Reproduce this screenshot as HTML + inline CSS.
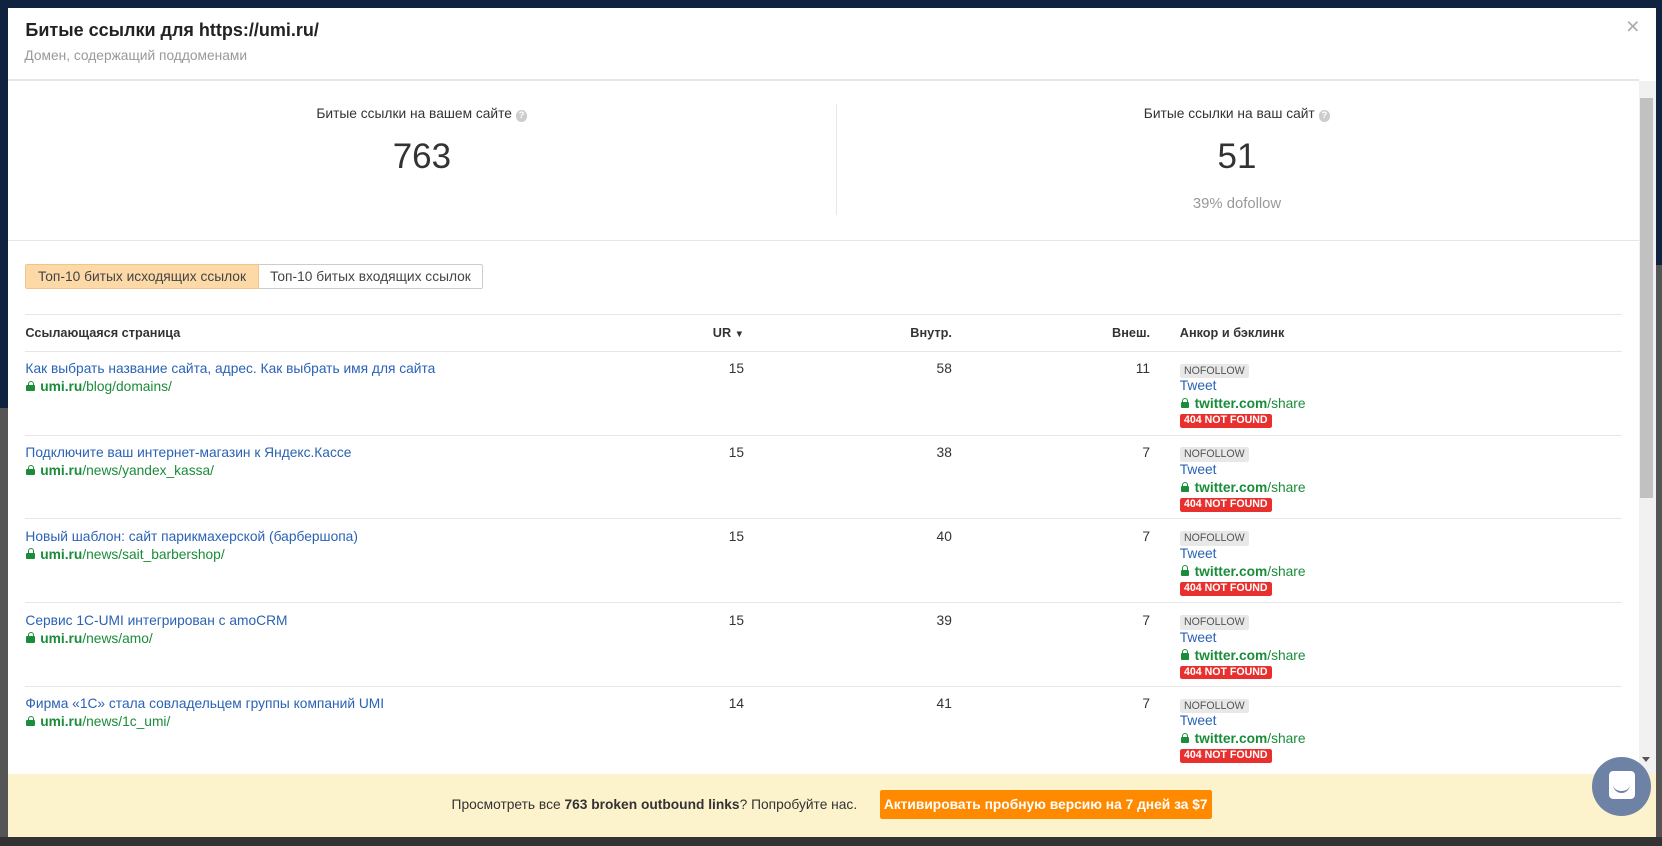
<!DOCTYPE html>
<html><head><meta charset="utf-8"><style>
html,body{margin:0;padding:0;overflow:hidden}
body{width:1568px;height:798px;zoom:1.06;background:#0f2340;font-family:"Liberation Sans",Arial,sans-serif;position:relative;color:#333}
.a{position:absolute}
.modal{left:8px;top:8px;width:1554px;height:782px;background:#fff;overflow:hidden}
.t{font-size:13px;white-space:nowrap}
.lnk{color:#2a62b5}
.grn{color:#1a8c3a}
.lock{display:inline-block;width:8px;height:6px;background:#1a8c3a;border-radius:1px;position:relative;margin-right:5px;vertical-align:0px}
.lock:before{content:"";position:absolute;left:1px;top:-4px;width:4px;height:4px;border:1px solid #1a8c3a;border-bottom:none;border-radius:3px 3px 0 0}
.nf{font-size:10px;background:#e8e8e8;color:#555;padding:1px 4px;border-radius:2px;display:block;line-height:12px}
.e4{font-size:10px;background:#e8312f;color:#fff;padding:1px 4px;border-radius:2px;font-weight:bold;display:block;line-height:11px}
.hl{height:1px;background:#e6e6e6}
</style></head><body>
<div class="a" style="left:0;top:385px;width:8px;height:413px;background:#555"></div>
<div class="a" style="left:1562px;top:250px;width:6px;height:548px;background:#555"></div>
<div class="a" style="left:0;top:790px;width:1568px;height:8px;background:#333"></div>
<div class="a modal">
 <div class="a" style="left:16px;top:11px;font-size:17px;font-weight:bold;color:#222">Битые ссылки для https://umi.ru/</div>
 <div class="a" style="left:15px;top:37px;font-size:13px;color:#999">Домен, содержащий поддоменами</div>
 <div class="a" style="left:1526px;top:4px;font-size:22px;color:#aaa">×</div>
 <div class="a hl" style="left:0;top:67px;width:1538px"></div>
 <div class="a" style="left:1538px;top:68px;width:16px;height:654px;background:#f1f1f1"></div>
 <div class="a" style="left:1539px;top:84px;width:12px;height:378px;background:#c1c1c1"></div>
 <div class="a" style="left:1541px;top:706px;border:4px solid transparent;border-top:5px solid #555"></div>

 <div class="a t" style="left:0;width:780px;top:92px;text-align:center">Битые ссылки на вашем сайте <span style="display:inline-block;width:11px;height:11px;border-radius:50%;background:#ccc;color:#fff;font-size:9px;line-height:11px;font-weight:bold">?</span></div>
 <div class="a" style="left:0;width:780px;top:121px;text-align:center;font-size:33px;color:#333">763</div>
 <div class="a" style="left:781px;top:90px;width:1px;height:105px;background:#e6e6e6"></div>
 <div class="a t" style="left:781px;width:756px;top:92px;text-align:center">Битые ссылки на ваш сайт <span style="display:inline-block;width:11px;height:11px;border-radius:50%;background:#ccc;color:#fff;font-size:9px;line-height:11px;font-weight:bold">?</span></div>
 <div class="a" style="left:781px;width:756px;top:121px;text-align:center;font-size:33px;color:#333">51</div>
 <div class="a" style="left:781px;width:756px;top:177px;text-align:center;font-size:14px;color:#999">39% dofollow</div>
 <div class="a hl" style="left:0;top:218px;width:1538px"></div>

 <div class="a t" style="left:16px;top:241px;width:218px;height:22px;line-height:22px;background:#fdd9a8;border:1px solid #f0c48a;border-radius:2px 0 0 2px;text-align:center;color:#444">Топ-10 битых исходящих ссылок</div>
 <div class="a t" style="left:236px;top:241px;width:211px;height:22px;line-height:22px;border:1px solid #ccc;border-left:none;border-radius:0 2px 2px 0;text-align:center;color:#444">Топ-10 битых входящих ссылок</div>

 <div class="a hl" style="left:16px;top:288px;width:1506px"></div>
 <div class="a t" style="left:16px;top:299px;font-weight:bold;font-size:12px">Ссылающаяся страница</div>
 <div class="a t" style="left:600px;width:94px;top:299px;text-align:right;font-weight:bold;font-size:12px">UR <span style="font-size:9px">▼</span></div>
 <div class="a t" style="left:780px;width:110px;top:299px;text-align:right;font-weight:bold;font-size:12px">Внутр.</div>
 <div class="a t" style="left:980px;width:97px;top:299px;text-align:right;font-weight:bold;font-size:12px">Внеш.</div>
 <div class="a t" style="left:1105px;top:299px;font-weight:bold;font-size:12px">Анкор и бэклинк</div>

 <div id="rows"></div>
</div>
<div class="a" style="left:8px;top:730px;width:1554px;height:60px;background:#fcf2cc"></div>
<div class="a t" style="left:426px;top:752px;color:#333">Просмотреть все <b>763 broken outbound links</b>? Попробуйте нас.</div>
<div class="a t" style="left:830px;top:745px;width:313px;height:28px;line-height:28px;background:#ff8a00;color:#fff;font-weight:bold;text-align:center;border-radius:2px">Активировать пробную версию на 7 дней за $7</div>
<div class="a" style="left:1502px;top:714px;width:56px;height:56px;border-radius:50%;background:#6e82a5"></div>
<div class="a" style="left:1518px;top:727px;width:24px;height:27px;background:#fff;border-radius:4px"></div>
<div class="a" style="left:1522px;top:740px;width:16px;height:6px;border-bottom:2px solid #6e82a5;border-radius:0 0 8px 8px"></div>

<script>
var d=[["Как выбрать название сайта, адрес. Как выбрать имя для сайта","/blog/domains/",15,58,11],
["Подключите ваш интернет-магазин к Яндекс.Кассе","/news/yandex_kassa/",15,38,7],
["Новый шаблон: сайт парикмахерской (барбершопа)","/news/sait_barbershop/",15,40,7],
["Сервис 1С-UMI интегрирован с amoCRM","/news/amo/",15,39,7],
["Фирма «1С» стала совладельцем группы компаний UMI","/news/1c_umi/",14,41,7]];
var h="";
d.forEach(function(r,i){var y=323+i*79;
h+='<div class="a hl" style="left:16px;top:'+y+'px;width:1506px"></div>';
h+='<div class="a t lnk" style="left:16px;top:'+(y+10)+'px">'+r[0]+'</div>';
h+='<div class="a t grn" style="left:17px;top:'+(y+27)+'px"><span class="lock"></span><b>umi.ru</b>'+r[1]+'</div>';
h+='<div class="a t" style="left:600px;width:94px;top:'+(y+10)+'px;text-align:right">'+r[2]+'</div>';
h+='<div class="a t" style="left:780px;width:110px;top:'+(y+10)+'px;text-align:right">'+r[3]+'</div>';
h+='<div class="a t" style="left:980px;width:97px;top:'+(y+10)+'px;text-align:right">'+r[4]+'</div>';
h+='<div class="a" style="left:1105px;top:'+(y+12)+'px"><span class="nf">NOFOLLOW</span></div>';
h+='<div class="a t lnk" style="left:1105px;top:'+(y+26)+'px">Tweet</div>';
h+='<div class="a t grn" style="left:1106px;top:'+(y+43)+'px"><span class="lock"></span><b>twitter.com</b>/share</div>';
h+='<div class="a" style="left:1105px;top:'+(y+60)+'px"><span class="e4">404 NOT FOUND</span></div>';
});
document.getElementById("rows").innerHTML=h;
</script>
</body></html>
